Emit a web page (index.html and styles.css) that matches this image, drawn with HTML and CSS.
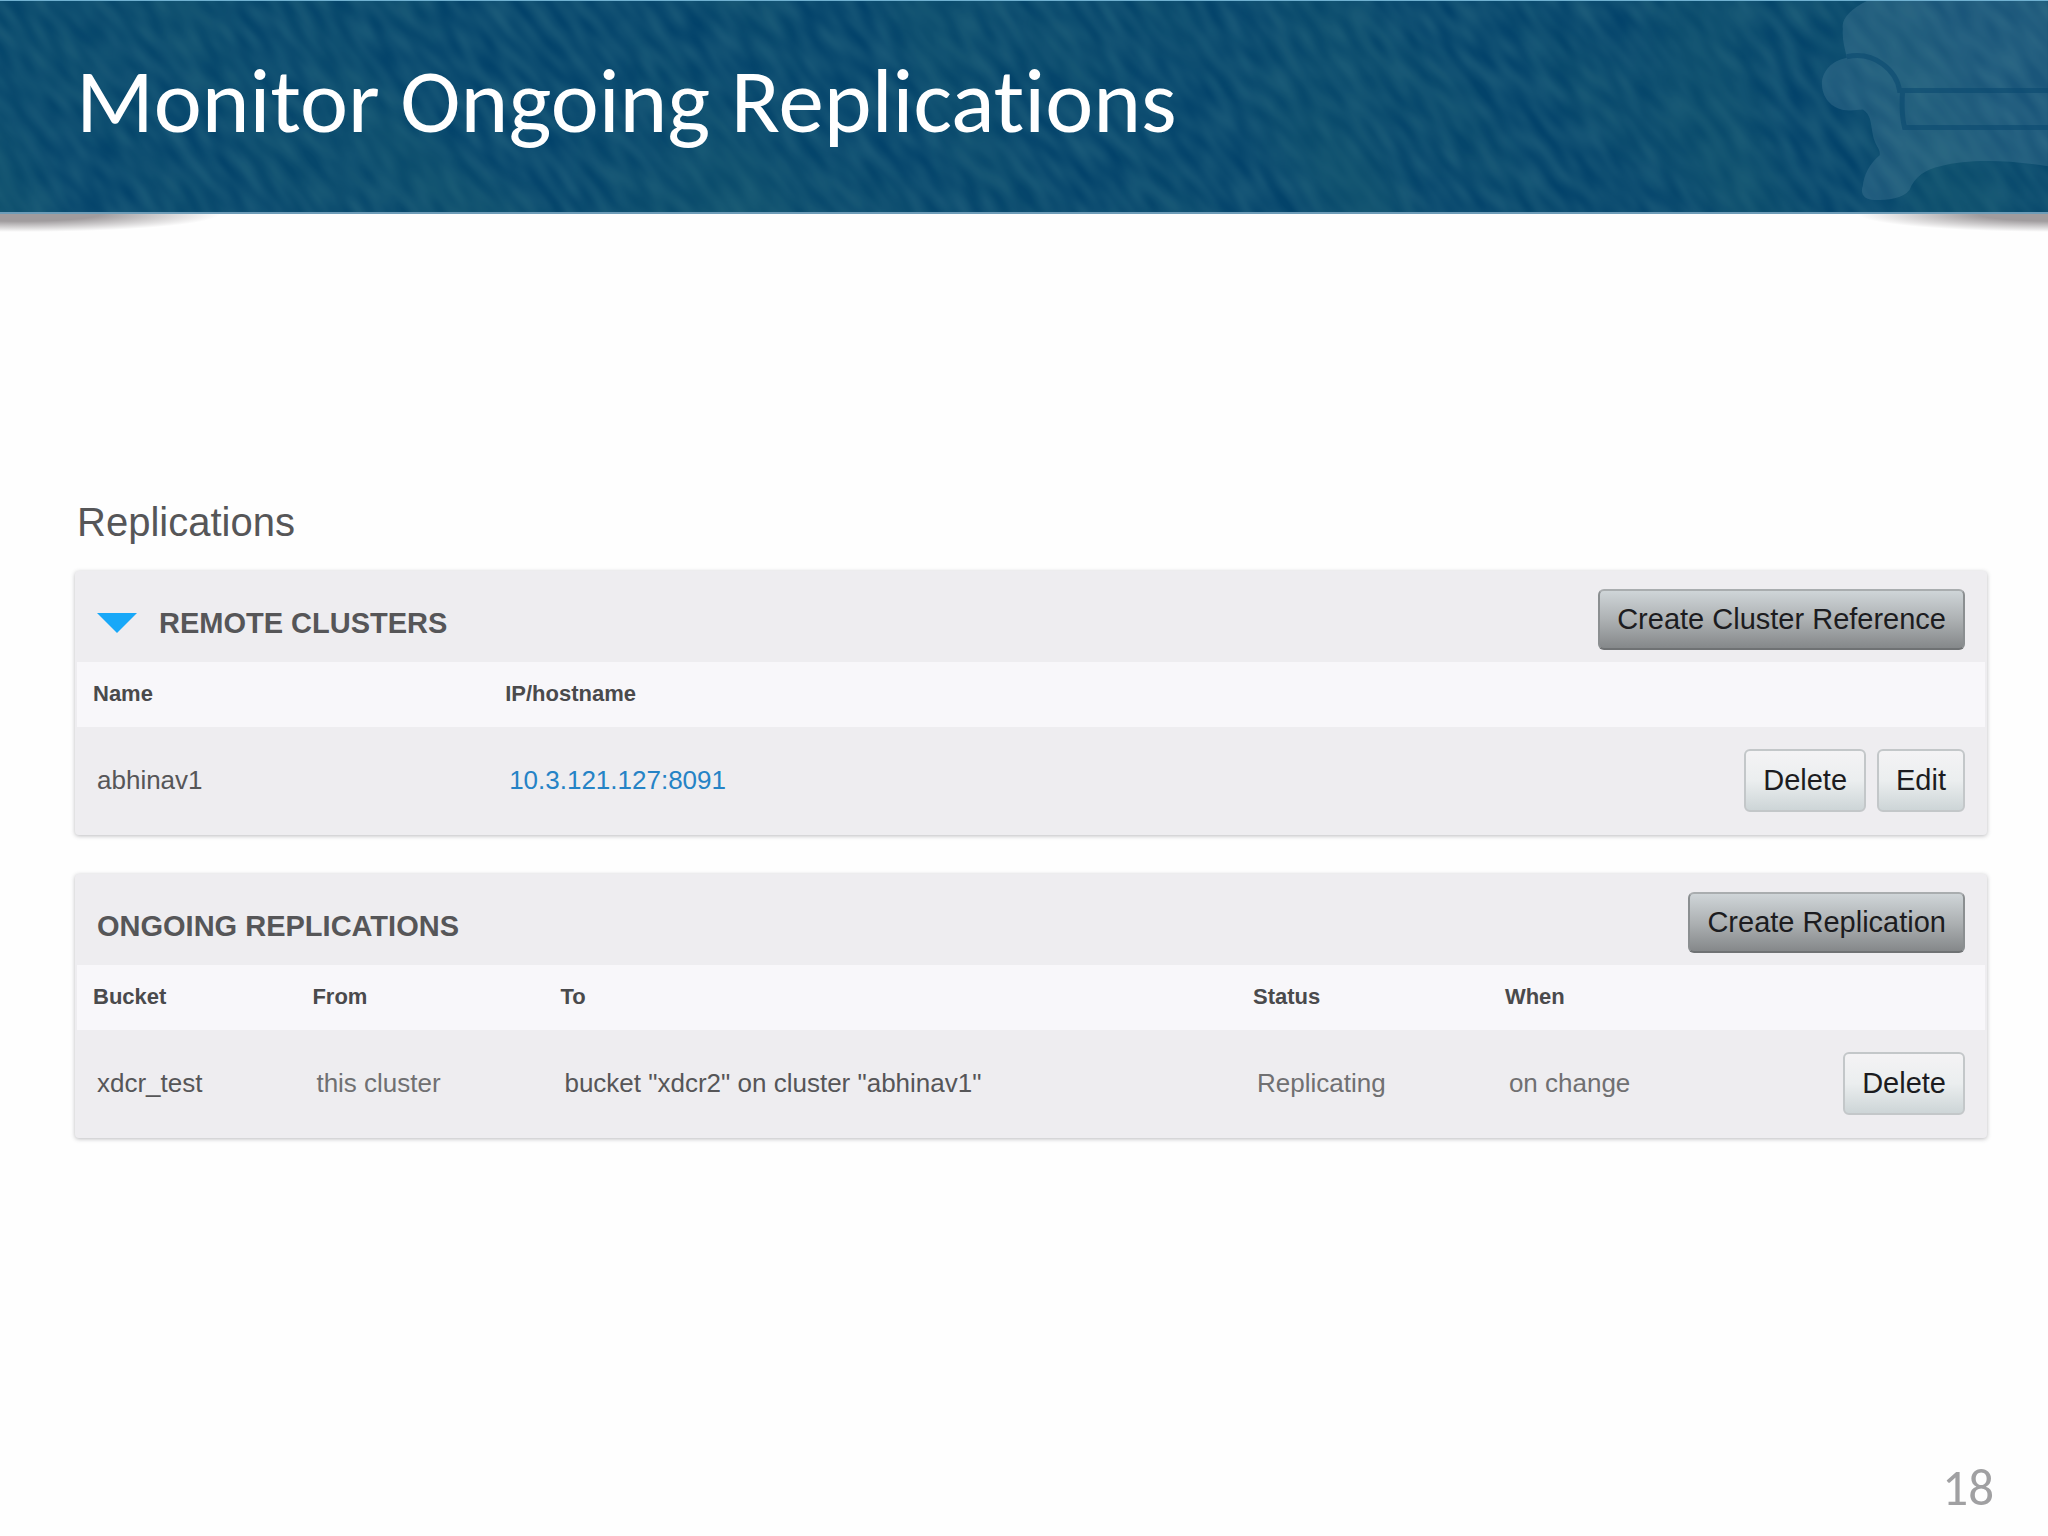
FILE: index.html
```html
<!DOCTYPE html>
<html lang="en">
<head>
  <meta charset="UTF-8">
  <title>Monitor Ongoing Replications</title>
  <link rel="stylesheet" href="styles.css">
</head>
<body>

  <header class="banner">
    <div class="banner-art">
      <!-- Denim texture -->
      <svg class="texture" aria-hidden="true">
        <filter id="weave" x="0" y="0" width="100%" height="100%" color-interpolation-filters="sRGB">
          <feTurbulence type="fractalNoise" baseFrequency="0.03 0.085" numOctaves="1" seed="7"/>
          <feColorMatrix values="0 0 0 0 0.13  0 0 0 0 0.38  0 0 0 0 0.49  1.3 0 0 0 -0.3"/>
        </filter>
        <filter id="patches" x="0" y="0" width="100%" height="100%" color-interpolation-filters="sRGB">
          <feTurbulence type="fractalNoise" baseFrequency="0.004 0.01" numOctaves="1" seed="3"/>
          <feColorMatrix values="0 0 0 0 0.1  0 0 0 0 0.37  0 0 0 0 0.44  1.2 0 0 0 -0.5"/>
        </filter>
        <g transform="rotate(52)">
          <rect x="-100" y="-1700" width="1700" height="2000" filter="url(#weave)"/>
          <rect x="-100" y="-1700" width="1700" height="2000" filter="url(#patches)"/>
        </g>
      </svg>
      <!-- Couch -->
      <svg class="couch" viewBox="0 0 238 212" aria-hidden="true">
        <path class="couch-body" d="M56 0 C40 8 30 18 32 28 C31 38 34 48 36 57 C20 60 10 72 11 85 C12 100 24 111 40 110 L52 109 C60 114 60 122 62 134 C64 146 70 148 69 155 C58 164 53 176 52 186 C49 194 54 200 64 200 C78 200 92 199 99 190 C104 176 116 169 130 166 C160 158 200 160 238 166 V0 Z"/>
        <path class="couch-seam" d="M36 56 C64 50 86 70 89 90 H238 M92 90 C91 106 91 116 94 127 H238"/>
      </svg>
    </div>
    <h1>Monitor Ongoing Replications</h1>
  </header>

  <main>
    <h2>Replications</h2>

    <section class="panel">
      <div class="panel-head">
        <h3>
          <svg class="arrow" viewBox="0 0 40 20" aria-hidden="true"><path d="M0 0 H40 L20 20 Z"/></svg>
          REMOTE CLUSTERS
        </h3>
        <button type="button" class="btn btn-dark">Create Cluster Reference</button>
      </div>
      <table>
        <thead>
          <tr>
            <th class="col-name">Name</th>
            <th>IP/hostname</th>
            <th></th>
          </tr>
        </thead>
        <tbody>
          <tr>
            <td>abhinav1</td>
            <td><a href="#">10.3.121.127:8091</a></td>
            <td>
              <div class="actions">
                <button type="button" class="btn">Delete</button>
                <button type="button" class="btn">Edit</button>
              </div>
            </td>
          </tr>
        </tbody>
      </table>
    </section>

    <section class="panel">
      <div class="panel-head">
        <h3>ONGOING REPLICATIONS</h3>
        <button type="button" class="btn btn-dark">Create Replication</button>
      </div>
      <table>
        <thead>
          <tr>
            <th class="col-bucket">Bucket</th>
            <th class="col-from">From</th>
            <th class="col-to">To</th>
            <th class="col-status">Status</th>
            <th>When</th>
            <th></th>
          </tr>
        </thead>
        <tbody>
          <tr>
            <td>xdcr_test</td>
            <td class="muted">this cluster</td>
            <td>bucket "xdcr2" on cluster "abhinav1"</td>
            <td class="muted">Replicating</td>
            <td class="muted">on change</td>
            <td>
              <div class="actions">
                <button type="button" class="btn">Delete</button>
              </div>
            </td>
          </tr>
        </tbody>
      </table>
    </section>
  </main>

  <footer>18</footer>

</body>
</html>
```
FILE: styles.css
```css
* {
  box-sizing: border-box;
}

body {
  margin: 0;
  min-height: 100vh;
  display: flex;
  flex-direction: column;
  background: #fefefe;
  color: #565658;
  font-family: "Liberation Sans", Arial, sans-serif;
}

h1, h2, h3 {
  margin: 0;
}

/* Banner */
.banner {
  position: relative;
  padding: 46px 76px 58px;
}

/* Curled corner shadows under the banner */
.banner::before,
.banner::after {
  content: "";
  position: absolute;
  bottom: -18px;
  width: 230px;
  height: 36px;
}

.banner::before {
  left: 0;
  background: radial-gradient(ellipse 200px 18px at 20px 18px, #a09c9e 40%, transparent);
}

.banner::after {
  right: 0;
  background: radial-gradient(ellipse 200px 18px at 240px 18px, #a09c9e 40%, transparent);
}

.banner-art {
  position: absolute;
  inset: 0;
  z-index: 1;
  overflow: hidden;
  background: #02426a;
  border-top: 1px solid #6fb0d0;
  border-bottom: 2px solid #6d9cb8;
}

.texture {
  position: absolute;
  width: 100%;
  height: 100%;
}

.couch {
  position: absolute;
  right: 0;
  top: 0;
  height: 100%;
}

.couch-body {
  fill: #5c8ba6;
  fill-opacity: 0.27;
}

.couch-seam {
  fill: none;
  stroke: #0a4a70;
  stroke-width: 5;
  stroke-opacity: 0.6;
}

.banner h1 {
  position: relative;
  z-index: 2;
  color: #fff;
  font-family: Carlito, Calibri, Lato, sans-serif;
  font-size: 91px;
  line-height: 110px;
  font-weight: normal;
  font-variant-ligatures: none;
}

/* Content */
main {
  padding: 280px 61px 0 75px;
}

h2 {
  padding-left: 2px;
  margin-bottom: 21px;
  font-size: 40px;
  line-height: 56px;
  font-weight: normal;
}

.panel {
  margin-bottom: 39px;
  padding: 0 2px 2px;
  background: #eeedf0;
  border-radius: 4px;
  box-shadow: 0 1px 4px rgba(60, 60, 70, 0.35);
}

.panel-head {
  display: flex;
  justify-content: space-between;
  align-items: center;
  padding: 18px 20px 12px;
}

.panel-head h3 {
  display: flex;
  align-items: center;
  gap: 22px;
  padding-top: 6px;
  font-size: 29px;
  line-height: 32px;
}

.arrow {
  width: 40px;
  height: 20px;
  fill: #18a8f8;
}

table {
  width: 100%;
  border-collapse: collapse;
  table-layout: fixed;
}

th {
  height: 65px;
  padding: 0 16px 2px;
  background: #f8f7fa;
  color: #4a4a4c;
  font-size: 22px;
  text-align: left;
}

td {
  height: 106px;
  padding: 0 20px;
  font-size: 26px;
}

.col-name {
  width: 21.6%;
}

.col-bucket {
  width: 11.5%;
}

.col-from {
  width: 13%;
}

.col-to {
  width: 36.3%;
}

.col-status {
  width: 13.2%;
}

.muted {
  color: #707072;
}

a {
  color: #2583c6;
  text-decoration: none;
}

.actions {
  display: flex;
  justify-content: flex-end;
  gap: 11px;
}

.btn {
  height: 63px;
  padding: 0 17px;
  border: 2px solid #c3c7c9;
  border-radius: 6px;
  background: linear-gradient(#f4f3f5, #ebeeef 50%, #cdd5d7);
  color: #1c1c20;
  font-family: inherit;
  font-size: 29px;
  cursor: pointer;
}

.btn-dark {
  height: 61px;
  border-color: #a9adaf #8b8f91 #6f7274;
  background: linear-gradient(#cfd5d8, #adb1b3 50%, #85888a);
}

footer {
  margin-top: auto;
  padding: 0 54px 20px;
  color: #a0a0a2;
  font-family: Carlito, Calibri, Lato, sans-serif;
  font-size: 51px;
  line-height: 56px;
  text-align: right;
}
```
